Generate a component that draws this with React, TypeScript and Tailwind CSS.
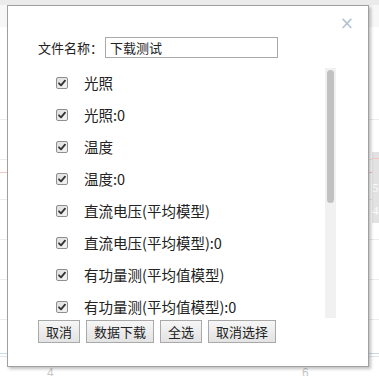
const items = [
  "光照",
  "光照:0",
  "温度",
  "温度:0",
  "直流电压(平均模型)",
  "直流电压(平均模型):0",
  "有功量测(平均值模型)",
  "有功量测(平均值模型):0",
];

const font = "font-['Noto_Sans_CJK_SC',sans-serif]";

const CheckBox = () => (
  <svg width="12" height="12" viewBox="0 0 12 12" className="shrink-0">
    <defs>
      <linearGradient id="cb" x1="0" y1="0" x2="1" y2="1">
        <stop offset="0" stopColor="#dcdcdc" />
        <stop offset="1" stopColor="#f6f6f6" />
      </linearGradient>
    </defs>
    <rect x="0.5" y="0.5" width="11" height="11" rx="1.5" fill="url(#cb)" stroke="#8f8f8f" />
    <path d="M3 6.3 L5 8.3 L9 3.6" fill="none" stroke="#333" strokeWidth="1.8" strokeLinecap="round" strokeLinejoin="round" />
  </svg>
);

const Btn = ({ children }: { children: string }) => (
  <button className="h-[23px] px-[7px] border border-[#a9a9a9] bg-gradient-to-b from-[#f6f6f6] to-[#e3e3e3] text-[13px] text-[#222] leading-none">
    {children}
  </button>
);

const Backdrop = () => (
  <svg width="379" height="376" className="absolute inset-0">
    <rect x="0" y="0" width="379" height="5" fill="#ebebeb" />
    <rect x="0" y="5" width="379" height="22" fill="#f7f7f7" />
    {[119, 159, 199, 239, 279, 319].map((y) => (
      <line key={y} x1="0" x2="379" y1={y + 0.5} y2={y + 0.5} stroke="#ececec" />
    ))}
    <line x1="0" x2="379" y1="172.5" y2="172.5" stroke="#f2c7c7" />
    <line x1="0" x2="379" y1="353.5" y2="353.5" stroke="#cddbe6" />
    <line x1="0" x2="379" y1="356.5" y2="356.5" stroke="#dde6ee" />
    <rect x="372" y="152" width="7" height="71" fill="#e2e2e2" />
    <line x1="372" x2="379" y1="158.5" y2="158.5" stroke="#f0c8c0" />
    <text x="372" y="192" fontSize="13" fill="#fafafa" fontFamily="Liberation Serif, serif">5</text>
    <text x="372" y="215" fontSize="13" fill="#fafafa" fontFamily="Liberation Serif, serif">4</text>
    <text x="47" y="377" fontSize="12" fill="#c8c8c8" fontFamily="Liberation Sans, sans-serif">4</text>
    <text x="302" y="377" fontSize="12" fill="#c8c8c8" fontFamily="Liberation Sans, sans-serif">6</text>
  </svg>
);

export default function App() {
  return (
    <div className={`relative w-[379px] h-[376px] overflow-hidden bg-white ${font}`}>
      <Backdrop />
      <div className="absolute left-[7px] top-[5px] w-[362px] h-[362px] bg-white border border-[#a0a0a0] shadow-[2px_2px_3px_rgba(0,0,0,0.25)]">
        <span className="absolute right-[14px] top-[9px] text-[17px] leading-none text-[#b4c3d3] font-['DejaVu_Sans',sans-serif]">×</span>
        <div className="pl-[30px] pt-[31px] flex flex-col">
          <div className="flex items-center h-[21px]">
            <span className="text-[13px] text-[#222] w-[67px]">文件名称：</span>
            <input
              defaultValue="下载测试"
              className="w-[173px] h-[21px] border border-[#a9a9a9] px-[4px] text-[13px] text-[#222] outline-none"
            />
          </div>
          <div className="flex mt-[10px] h-[250px]">
            <div className="flex-1 overflow-hidden -mt-[1px]">
              {items.map((t) => (
                <div key={t} className="flex items-center h-[32px] pl-[18px]">
                  <CheckBox />
                  <span className="ml-[16px] text-[14.5px] text-[#222]">{t}</span>
                </div>
              ))}
            </div>
            <div className="w-[11px] bg-[#f1f1f1] mr-[32px] pt-[2px] flex justify-center">
              <div className="w-[7px] h-[133px] rounded-full bg-[#c1c1c1]" />
            </div>
          </div>
          <div className="flex gap-[6px] mt-[2px]">
            <Btn>取消</Btn>
            <Btn>数据下载</Btn>
            <Btn>全选</Btn>
            <Btn>取消选择</Btn>
          </div>
        </div>
      </div>
    </div>
  );
}
